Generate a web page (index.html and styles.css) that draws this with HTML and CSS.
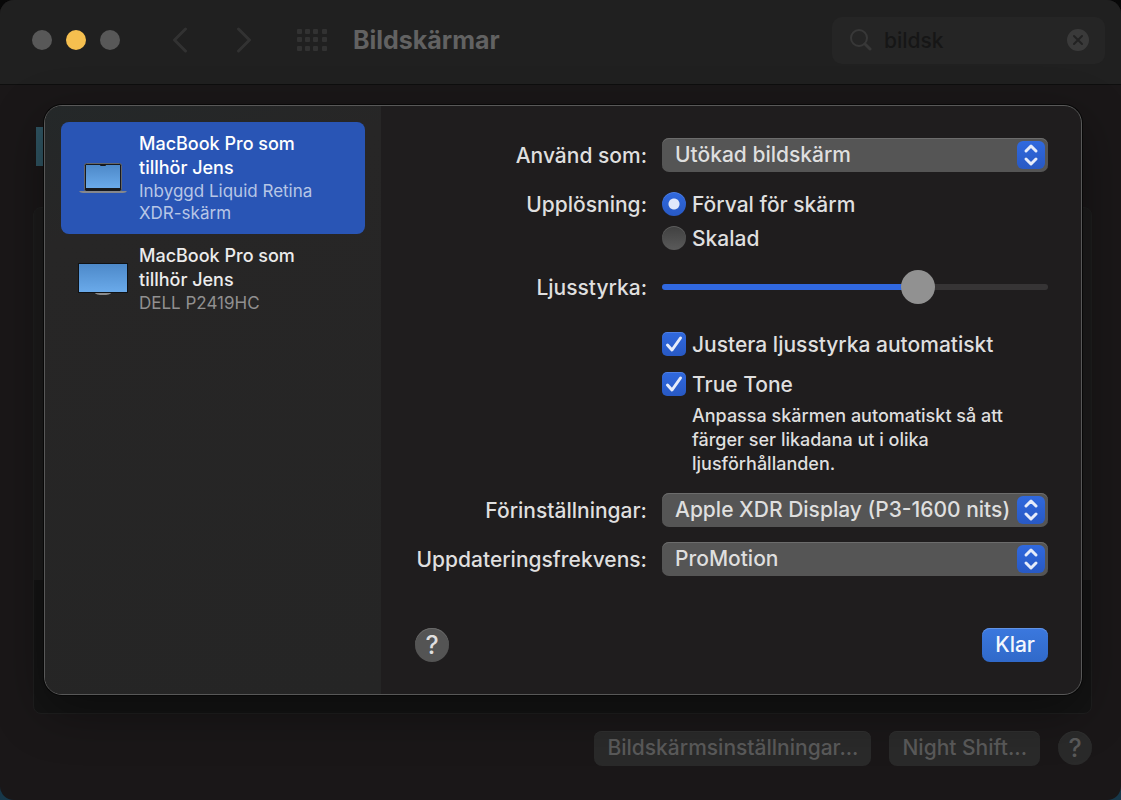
FILE: index.html
```
<!DOCTYPE html>
<html lang="sv">
<head>
<meta charset="UTF-8">
<meta name="viewport" content="width=device-width, initial-scale=1">
<title>Bildskärmar</title>
<link rel="stylesheet" href="styles.css">
</head>

<body>

<div class="window">

    <!-- TOOLBAR -->
    <header class="toolbar">
        <div class="lights">
            <button class="light" aria-label="Stäng"></button>
            <button class="light minimize" aria-label="Minimera"></button>
            <button class="light" aria-label="Zooma"></button>
        </div>
        <div class="nav">
            <button class="icon-btn" aria-label="Bakåt">
                <svg width="16" height="26" viewBox="0 0 16 26"><path d="M13.500 2 L2.500 13 L13.500 24"/></svg>
            </button>
            <button class="icon-btn" aria-label="Framåt">
                <svg width="16" height="26" viewBox="0 0 16 26"><path d="M2.500 2 L13.500 13 L2.500 24"/></svg>
            </button>
        </div>
        <button class="icon-btn all-btn" aria-label="Visa alla">
            <svg class="dots" width="30" height="24" viewBox="0 0 30 24">
                <rect x="0" y="1" width="5" height="5" rx="1"/><rect x="8" y="1" width="5" height="5" rx="1"/><rect x="16" y="1" width="5" height="5" rx="1"/><rect x="25" y="1" width="5" height="5" rx="1"/>
                <rect x="0" y="9" width="5" height="5" rx="1"/><rect x="8" y="9" width="5" height="5" rx="1"/><rect x="16" y="9" width="5" height="5" rx="1"/><rect x="25" y="9" width="5" height="5" rx="1"/>
                <rect x="0" y="18" width="5" height="5" rx="1"/><rect x="8" y="18" width="5" height="5" rx="1"/><rect x="16" y="18" width="5" height="5" rx="1"/><rect x="25" y="18" width="5" height="5" rx="1"/>
            </svg>
        </button>
        <h1>Bildskärmar</h1>
        <div class="search">
            <svg class="search-icon" width="22" height="22" viewBox="0 0 22 22"><circle cx="9" cy="9" r="8"/><path d="M15 15 L20 20" stroke-width="3"/></svg>
            <input type="text" value="bildsk" aria-label="Sök">
            <button class="clear" aria-label="Rensa">
                <svg width="22" height="22" viewBox="0 0 22 22"><circle cx="11" cy="11" r="11" stroke="none"/><path d="M7 7 L15 15 M15 7 L7 15"/></svg>
            </button>
        </div>
    </header>

    <!-- PANE BEHIND THE SHEET -->
    <main class="pane">
        <div class="thumb"></div>
        <div class="group"></div>
        <div class="pane-footer">
            <button class="dim-btn">Bildskärmsinställningar...</button>
            <button class="dim-btn">Night Shift...</button>
            <button class="help dim-help" aria-label="Hjälp">?</button>
        </div>
    </main>

    <!-- SHEET -->
    <section class="sheet" role="dialog" aria-label="Bildskärmsinställningar">
        <aside class="sidebar">
            <button class="display selected">
                <svg width="50" height="34" viewBox="0 0 50 34">
                    <defs>
                        <linearGradient id="screen" x1="0" y1="0" x2="0" y2="1">
                            <stop offset="0" stop-color="#4d89c9"/>
                            <stop offset="1" stop-color="#6aaaea"/>
                        </linearGradient>
                    </defs>
                    <rect x="6.500" y="2.500" width="37" height="28" rx="2" fill="#17191d" stroke="#63666b"/>
                    <rect x="8" y="4" width="34" height="23" fill="url(#screen)"/>
                    <rect x="22" y="3" width="6" height="2" rx="1" fill="#17191d"/>
                    <path d="M1 30 H49 Q48 32 45 32 H5 Q2 32 1 30 Z" fill="#85878c"/>
                </svg>
                <span class="display-text">
                    <span class="name">MacBook Pro som tillhör Jens</span>
                    <span class="model">Inbyggd Liquid Retina XDR-skärm</span>
                </span>
            </button>
            <button class="display">
                <svg width="50" height="34" viewBox="0 0 50 34">
                    <ellipse cx="25" cy="31" rx="8" ry="2" fill="#8b8b8b"/>
                    <rect x="0" y="1" width="50" height="30" fill="#101214"/>
                    <rect x="1" y="2" width="48" height="28" fill="url(#screen)"/>
                </svg>
                <span class="display-text">
                    <span class="name">MacBook Pro som tillhör Jens</span>
                    <span class="model">DELL P2419HC</span>
                </span>
            </button>
        </aside>

        <form class="settings">
            <div class="row">
                <label class="row-label" for="use-as">Använd som:</label>
                <div class="select">
                    <select id="use-as"><option>Utökad bildskärm</option></select>
                    <svg width="28" height="28" viewBox="0 0 28 28"><path d="M9 10 L14 5 L19 10 M9 18 L14 23 L19 18"/></svg>
                </div>
            </div>

            <div class="row">
                <span class="row-label" id="res-label">Upplösning:</span>
                <div role="radiogroup" aria-labelledby="res-label">
                    <label class="choice"><input type="radio" name="res" checked>Förval för skärm</label>
                    <label class="choice"><input type="radio" name="res">Skalad</label>
                </div>
            </div>

            <div class="row">
                <label class="row-label" for="brightness">Ljusstyrka:</label>
                <input type="range" id="brightness" min="0" max="100" value="68" style="--fill: 68%">
            </div>

            <div class="row checks">
                <div class="control">
                    <label class="choice"><input type="checkbox" checked>Justera ljusstyrka automatiskt</label>
                    <label class="choice"><input type="checkbox" checked aria-describedby="tone-hint">True Tone</label>
                    <p class="hint" id="tone-hint">Anpassa skärmen automatiskt så att färger ser likadana ut i olika ljusförhållanden.</p>
                </div>
            </div>

            <div class="row">
                <label class="row-label" for="preset">Förinställningar:</label>
                <div class="select">
                    <select id="preset"><option>Apple XDR Display (P3-1600 nits)</option></select>
                    <svg width="28" height="28" viewBox="0 0 28 28"><path d="M9 10 L14 5 L19 10 M9 18 L14 23 L19 18"/></svg>
                </div>
            </div>

            <div class="row">
                <label class="row-label" for="rate">Uppdateringsfrekvens:</label>
                <div class="select">
                    <select id="rate"><option>ProMotion</option></select>
                    <svg width="28" height="28" viewBox="0 0 28 28"><path d="M9 10 L14 5 L19 10 M9 18 L14 23 L19 18"/></svg>
                </div>
            </div>

            <div class="sheet-footer">
                <button type="button" class="help" aria-label="Hjälp">?</button>
                <button type="button" class="done">Klar</button>
            </div>
        </form>
    </section>

</div>

<script>
// keep the blue part of the track in step with the knob
const brightness = document.getElementById("brightness");
brightness.addEventListener("input", () => {
    brightness.style.setProperty("--fill", brightness.value + "%");
});
</script>

</body>
</html>
```
FILE: styles.css
```
* {
    box-sizing: border-box;
}

body {
    margin: 0;
    background: linear-gradient(#080808 50%, #17384a);
    color: #dfdfdf;
    font-family: Inter, "Liberation Sans", sans-serif;
    font-size: 21px;
    font-weight: 500;
}

button, input, select {
    font: inherit;
    color: inherit;
    margin: 0;
}

button {
    border: none;
    padding: 0;
    background: none;
}

.window {
    position: relative;
    display: flex;
    flex-direction: column;
    min-height: 100vh;
    background: #1a1718;
    border-radius: 14px;
    overflow: hidden;
}

/* TOOLBAR */
.toolbar {
    display: flex;
    align-items: center;
    height: 85px;
    padding: 0 16px 4px 32px;
    background: #202020;
    border-bottom: 1px solid #0e0e0e;
}

.lights {
    display: flex;
    gap: 14px;
}

.light {
    width: 20px;
    height: 20px;
    border-radius: 50%;
    background: #585858;
}

.light.minimize {
    background: #f5bf4f;
}

.nav {
    display: flex;
    gap: 48px;
    margin-left: 52px;
}

.icon-btn {
    display: flex;
}

.icon-btn svg {
    fill: none;
    stroke: #323232;
    stroke-width: 3;
    stroke-linecap: round;
    stroke-linejoin: round;
}

.all-btn {
    margin-left: 45px;
}

.icon-btn .dots {
    fill: #323232;
    stroke: none;
}

h1 {
    margin: 0 auto 0 26px;
    font-size: 25px;
    line-height: 30px;
    font-weight: 700;
    color: #626262;
}

.search {
    display: flex;
    align-items: center;
    gap: 12px;
    width: 273px;
    height: 47px;
    padding: 0 16px 0 18px;
    border-radius: 10px;
    background: #252525;
}

.search input {
    flex: 1;
    min-width: 0;
    padding: 0;
    border: none;
    outline: none;
    background: none;
    color: #161616;
}

.search-icon {
    fill: none;
    stroke: #383838;
    stroke-width: 2;
    stroke-linecap: round;
}

.clear {
    display: flex;
}

.clear svg {
    fill: #3a3a3a;
    stroke: #222;
    stroke-width: 2;
    stroke-linecap: round;
}

/* PANE */
.pane {
    flex: 1;
    display: flex;
    flex-direction: column;
    padding: 42px 29px 34px 33px;
}

.thumb {
    width: 60px;
    height: 39px;
    margin: 0 0 41px 3px;
    background: #2f5563;
}

.group {
    flex: 1;
    min-height: 507px;
    border: 1px solid #1f1f1f;
    border-radius: 8px;
    background: linear-gradient(#1c1b1b 372px, #141414 372px);
}

.pane-footer {
    display: flex;
    justify-content: flex-end;
    gap: 18px;
    margin-top: 17px;
}

.dim-btn {
    height: 35px;
    padding: 0 13px 2px;
    border-radius: 8px;
    background: #2a2a2a;
    box-shadow: inset 0 1px #303030;
    color: #5a5a5a;
}

.help {
    width: 34px;
    height: 34px;
    border-radius: 50%;
    background: #545454;
    box-shadow: inset 0 1px #6a6a6a;
    font-size: 25px;
    line-height: 34px;
}

.dim-help {
    background: #2a2a2a;
    box-shadow: inset 0 1px #303030;
    color: #5a5a5a;
}

/* SHEET */
.sheet {
    position: absolute;
    top: 105px;
    left: 44px;
    right: 39px;
    display: flex;
    min-height: 590px;
    border: 1px solid #585858;
    border-radius: 18px;
    overflow: hidden;
    background: #1f1d1e;
    box-shadow: 0 0 0 1px #080808, 0 16px 50px rgba(0, 0, 0, 0.4);
}

.sidebar {
    width: 336px;
    padding: 16px;
    background: linear-gradient(160deg, #242829, #272626 20%, #252525);
}

.display {
    display: flex;
    align-items: center;
    gap: 11px;
    width: 100%;
    padding: 10px 17px;
    border-radius: 8px;
    text-align: left;
}

.display.selected {
    background: #2955b5;
}

.display svg {
    flex: none;
}

.display-text {
    width: 190px;
}

.name, .model {
    display: block;
}

.name {
    font-size: 18px;
    line-height: 24px;
    color: #ececec;
}

.model {
    font-size: 17px;
    line-height: 22px;
    font-weight: 400;
    color: #919090;
}

.selected .name {
    color: #fff;
}

.selected .model {
    color: #b7c6e6;
}

/* SETTINGS */
.settings {
    flex: 1;
    display: flex;
    flex-direction: column;
    gap: 15px;
    padding: 32px 33px 32px 34px;
}

.row {
    display: grid;
    grid-template-columns: 232px 1fr;
    column-gap: 15px;
}

.row-label {
    height: 34px;
    line-height: 36px;
    text-align: right;
    white-space: nowrap;
}

.control {
    grid-column: 2;
}

.select {
    position: relative;
    height: 34px;
}

.select select {
    appearance: none;
    width: 100%;
    height: 34px;
    padding: 0 34px 2px 13px;
    border: none;
    border-radius: 7px;
    background: #555;
    box-shadow: inset 0 1px #6c6c6c;
}

.select svg {
    position: absolute;
    top: 3px;
    right: 3px;
    border-radius: 6px;
    background: linear-gradient(#3069de, #2859c4);
    fill: none;
    stroke: #e6ecfa;
    stroke-width: 3;
    stroke-linecap: round;
    stroke-linejoin: round;
    pointer-events: none;
}

.choice {
    display: flex;
    align-items: center;
    gap: 6px;
    height: 34px;
    white-space: nowrap;
}

.choice input {
    appearance: none;
    width: 24px;
    height: 24px;
    background: linear-gradient(#404040, #5a5a5a);
    box-shadow: inset 0 1px rgba(255, 255, 255, 0.15);
}

.choice input[type="radio"] {
    border-radius: 50%;
}

.choice input[type="radio"]:checked {
    background: radial-gradient(circle, #dfe7fa 5px, transparent 6px), linear-gradient(#3069de, #2859c4);
}

.choice input[type="checkbox"] {
    border-radius: 5px;
}

.choice input[type="checkbox"]:checked {
    background: url("data:image/svg+xml,%3Csvg xmlns='http://www.w3.org/2000/svg' viewBox='0 0 24 24'%3E%3Cpath d='M5.500 13 L10 18 L18.500 6' fill='none' stroke='%23e6ecfa' stroke-width='3' stroke-linecap='round' stroke-linejoin='round'/%3E%3C/svg%3E"), linear-gradient(#3069de, #2859c4);
}

input[type="range"] {
    appearance: none;
    width: 100%;
    height: 34px;
    background: none;
}

input[type="range"]::-webkit-slider-runnable-track {
    height: 6px;
    border-radius: 3px;
    background: linear-gradient(90deg, #3068e0 var(--fill), #363435 var(--fill));
}

input[type="range"]::-webkit-slider-thumb {
    appearance: none;
    width: 34px;
    height: 34px;
    margin-top: -14px;
    border-radius: 50%;
    background: #919191;
}

.checks {
    margin: 8px 0 2px;
}

.checks .choice + .choice {
    margin-top: 6px;
}

.hint {
    margin: 3px 0 0;
    padding-left: 30px;
    max-width: 360px;
    font-size: 18px;
    line-height: 24px;
}

.sheet-footer {
    display: flex;
    justify-content: space-between;
    margin-top: auto;
}

.done {
    height: 34px;
    padding: 0 13px 2px;
    border-radius: 8px;
    background: linear-gradient(#3b78de, #3069c9);
    box-shadow: inset 0 1px #6293e5;
    color: #f4f7fd;
}
```
